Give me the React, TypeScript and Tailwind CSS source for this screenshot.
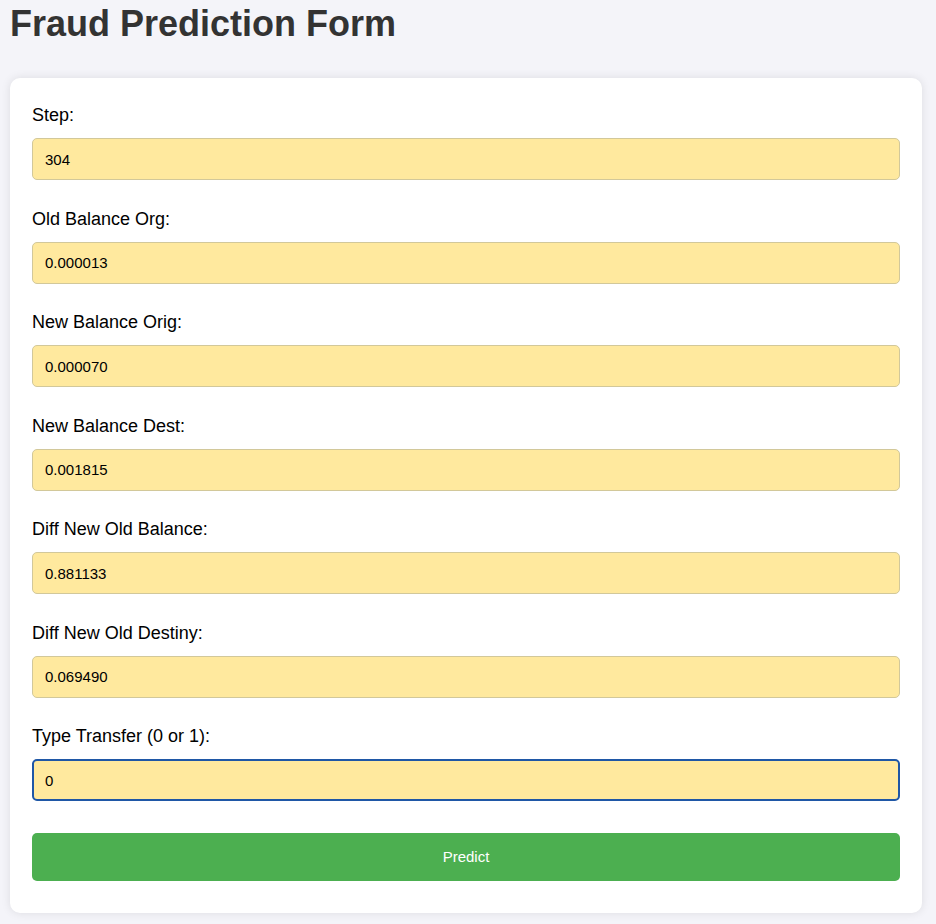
import React from 'react';

interface Field {
    label: string;
    value: string;
    focused?: boolean;
}

const fields: Field[] = [
    { label: 'Step:', value: '304' },
    { label: 'Old Balance Org:', value: '0.000013' },
    { label: 'New Balance Orig:', value: '0.000070' },
    { label: 'New Balance Dest:', value: '0.001815' },
    { label: 'Diff New Old Balance:', value: '0.881133' },
    { label: 'Diff New Old Destiny:', value: '0.069490' },
    { label: 'Type Transfer (0 or 1):', value: '0', focused: true },
];

export default function App() {
    return (
        <div className="min-h-screen bg-[#f4f4f9] px-[10px] pt-[3px] pb-[10px] font-['Liberation_Sans',Arial,sans-serif]">
            {/* Title */}
            <h1 className="text-[36px] leading-[41px] font-bold text-[#333333]">Fraud Prediction Form</h1>

            {/* Form card */}
            <form
                className="mt-[34px] w-[912px] bg-white rounded-[10px] shadow-[0_0_10px_rgba(0,0,0,0.1)] px-[22px] pt-[27px] pb-[32px]"
                onSubmit={(e) => e.preventDefault()}
            >
                {fields.map((f, i) => (
                    <div key={f.label} className={i === 0 ? '' : 'mt-[28.5px]'}>
                        <label className="block text-[18px] leading-[21px] text-black">{f.label}</label>
                        <input
                            type="text"
                            defaultValue={f.value}
                            className={
                                f.focused
                                    ? 'mt-[12px] block w-full h-[42px] px-[11px] rounded-[5px] bg-[#ffe99e] border-2 border-[#1f57a6] text-[15px] text-black outline-none'
                                    : 'mt-[12px] block w-full h-[42px] px-[12px] rounded-[5px] bg-[#ffe99e] border border-[#d2c89a] text-[15px] text-black outline-none'
                            }
                        />
                    </div>
                ))}
                <button
                    type="submit"
                    className="mt-[32px] block w-full h-[48px] rounded-[5px] bg-[#4caf50] text-white text-[15px]"
                >
                    Predict
                </button>
            </form>
        </div>
    );
}
